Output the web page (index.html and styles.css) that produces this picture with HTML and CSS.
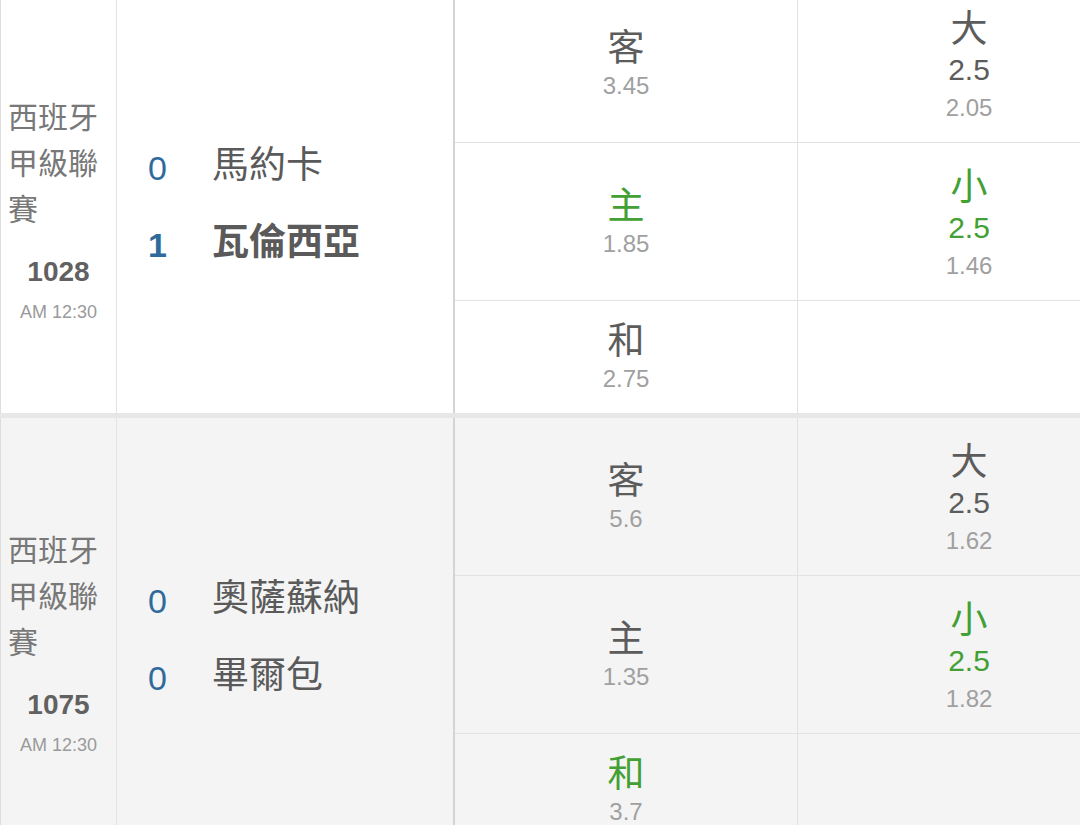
FILE: index.html
```html
<!DOCTYPE html>
<html lang="zh-Hant">
<head>
<meta charset="utf-8">
<title>賽事賠率</title>
<link rel="stylesheet" href="styles.css">
</head>
<body>
<div class="board">
  <div class="match">
    <div class="info">
      <div class="league">西班牙甲級聯賽</div>
      <div class="code">1028</div>
      <div class="time">AM 12:30</div>
    </div>
    <div class="teams">
      <div class="team"><span class="score">0</span><span class="name">馬約卡</span></div>
      <div class="team win"><span class="score">1</span><span class="name">瓦倫西亞</span></div>
    </div>
    <div class="odds">
      <div class="cell"><div class="label">客</div><div class="price">3.45</div></div>
      <div class="cell"><div class="label hl">主</div><div class="price">1.85</div></div>
      <div class="cell short"><div class="label">和</div><div class="price">2.75</div></div>
    </div>
    <div class="odds ou">
      <div class="cell"><div class="label">大</div><div class="line">2.5</div><div class="price">2.05</div></div>
      <div class="cell"><div class="label hl">小</div><div class="line hl">2.5</div><div class="price">1.46</div></div>
      <div class="cell short"></div>
    </div>
  </div>

  <div class="match alt">
    <div class="info">
      <div class="league">西班牙甲級聯賽</div>
      <div class="code">1075</div>
      <div class="time">AM 12:30</div>
    </div>
    <div class="teams">
      <div class="team"><span class="score">0</span><span class="name">奧薩蘇納</span></div>
      <div class="team"><span class="score">0</span><span class="name">畢爾包</span></div>
    </div>
    <div class="odds">
      <div class="cell"><div class="label">客</div><div class="price">5.6</div></div>
      <div class="cell"><div class="label">主</div><div class="price">1.35</div></div>
      <div class="cell short"><div class="label hl">和</div><div class="price">3.7</div></div>
    </div>
    <div class="odds ou">
      <div class="cell"><div class="label">大</div><div class="line">2.5</div><div class="price">1.62</div></div>
      <div class="cell"><div class="label hl">小</div><div class="line hl">2.5</div><div class="price">1.82</div></div>
      <div class="cell short"></div>
    </div>
  </div>
</div>
</body>
</html>
```

FILE: styles.css
```css
html, body {
  margin: 0;
  padding: 0;
}

body {
  width: 1080px;
  height: 825px;
  overflow: hidden;
  background: #ffffff;
  font-family: "Liberation Sans", "Noto Sans CJK TC", sans-serif;
  color: #555555;
}

.board {
  margin-top: -15px;
  width: 1141px;
}

.match {
  display: grid;
  grid-template-columns: 117px 338px 343px 343px;
  height: 433px;
  box-sizing: border-box;
  border-bottom: 5px solid #e7e7e7;
  background: #ffffff;
}

.match.alt {
  background: #f4f4f4;
}

.info {
  box-sizing: border-box;
  border-left: 1px solid #dedede;
  border-right: 1px solid #e4e4e4;
  padding-top: 107px;
  display: flex;
  flex-direction: column;
}

.league {
  font-family: "Noto Sans CJK TC", sans-serif;
  font-size: 30px;
  line-height: 46px;
  color: #787878;
  padding-left: 7px;
  padding-right: 6px;
}

.code {
  margin-top: 24px;
  font-size: 28px;
  line-height: 36px;
  font-weight: bold;
  color: #616161;
  text-align: center;
}

.time {
  margin-top: 10px;
  font-size: 18px;
  line-height: 24px;
  color: #9a9a9a;
  text-align: center;
}

.teams {
  box-sizing: border-box;
  border-right: 2px solid #d4d4d4;
  display: flex;
  flex-direction: column;
  justify-content: center;
  gap: 27px;
  padding-top: 2px;
}

.team {
  display: flex;
  align-items: flex-start;
  height: 50px;
}

.score {
  width: 64px;
  padding-left: 31px;
  font-size: 34px;
  line-height: 62px;
  color: #2f6a9c;
}

.name {
  font-family: "Noto Sans CJK TC", sans-serif;
  font-size: 37px;
  line-height: 50px;
  color: #5a5a5a;
}

.team.win .score,
.team.win .name {
  font-weight: bold;
}

.odds {
  box-sizing: border-box;
  border-right: 1px solid #e2e2e2;
  display: flex;
  flex-direction: column;
}

.cell {
  box-sizing: border-box;
  height: 158px;
  border-bottom: 1px solid #e2e2e2;
  display: flex;
  flex-direction: column;
  align-items: center;
  justify-content: center;
}

.cell.short {
  height: 112px;
  border-bottom: none;
}

.label {
  font-family: "Noto Sans CJK TC", sans-serif;
  font-size: 37px;
  line-height: 44px;
  color: #5c5c5c;
}

.price {
  font-size: 24px;
  line-height: 38px;
  color: #a0a0a0;
}

.ou .label {
  line-height: 46px;
}

.ou .price {
  line-height: 34px;
}

.line {
  font-size: 30px;
  line-height: 42px;
  color: #5c5c5c;
}

.ou .cell {
  padding-top: 1px;
}

.hl {
  color: #43a034;
}
```
